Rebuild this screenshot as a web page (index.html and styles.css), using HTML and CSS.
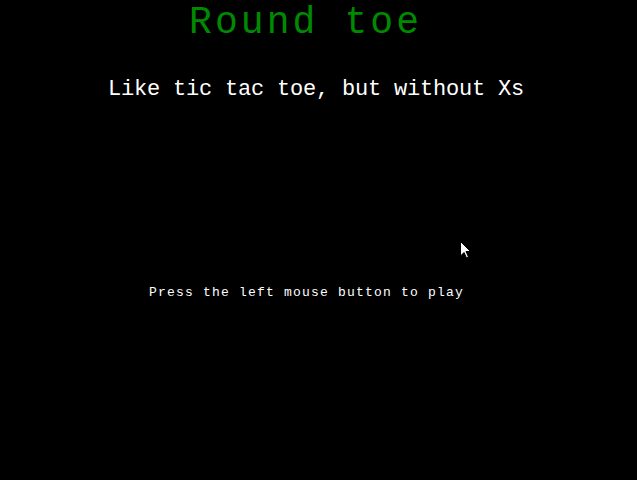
FILE: index.html
```html
<!DOCTYPE html>
<html>
<head>
<meta charset="utf-8">
<link rel="stylesheet" href="styles.css">
</head>
<body>
<main class="screen">
  <h1 class="title">Round toe</h1>
  <p class="subtitle">Like tic tac toe, but without Xs</p>
  <p class="prompt">Press the left mouse button to play</p>
  <svg class="cursor" width="12" height="18" viewBox="0 0 12 18">
    <path d="M0.5 0.5 L0.5 15 L4 11.5 L6.5 17 L8.5 16 L6 10.5 L10.5 10.5 Z" fill="#fff" stroke="#000" stroke-width="1"/>
  </svg>
</main>
</body>
</html>
```
FILE: styles.css
```css
html, body {
  margin: 0;
  padding: 0;
  background: #000;
}
.screen {
  position: relative;
  width: 637px;
  height: 480px;
  background: #000;
  display: flex;
  flex-direction: column;
  font-family: "Liberation Mono", "DejaVu Sans Mono", monospace;
  overflow: hidden;
}
.title {
  margin: 1px 0 0 189px;
  font-size: 38px;
  line-height: 43px;
  letter-spacing: 3.1px;
  font-weight: normal;
  color: #008a00;
  white-space: nowrap;
}
.subtitle {
  margin: 35px 0 0 108px;
  font-size: 22px;
  line-height: 22px;
  letter-spacing: -0.2px;
  color: #fff;
  white-space: nowrap;
}
.prompt {
  margin: 185px 0 0 149px;
  font-size: 13px;
  line-height: 13px;
  letter-spacing: 1.2px;
  color: #fff;
  white-space: nowrap;
}
.cursor {
  position: absolute;
  left: 460px;
  top: 241px;
}
```
